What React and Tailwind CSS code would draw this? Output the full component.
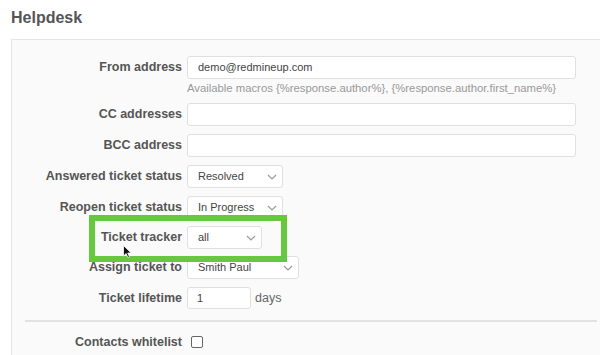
import React from 'react';

const font = { fontFamily: '"Liberation Sans", Arial, sans-serif' };

function Chevron() {
  return (
    <svg width="10" height="6" viewBox="0 0 10 6" className="shrink-0">
      <path d="M1 1l4 4 4-4" fill="none" stroke="#999" strokeWidth="1.2" />
    </svg>
  );
}

function Select({ value, width }) {
  return (
    <div className={`flex h-[23px] items-center justify-between whitespace-nowrap rounded-[3px] border border-[#e0e0e0] bg-white pl-[10px] pr-[5px] text-[11px] text-[#444] ${width}`}>
      <span>{value}</span>
      <Chevron />
    </div>
  );
}

function Row({ label, children, className = '' }) {
  return (
    <div className={`flex items-center ${className}`}>
      <label className="w-[170px] shrink-0 whitespace-nowrap text-right text-[12.5px] font-bold text-[#555]">{label}</label>
      <div className="ml-[5px] flex items-center">{children}</div>
    </div>
  );
}

export default function App() {
  return (
    <div className="relative h-[355px] w-[600px] overflow-hidden bg-white" style={font}>
      <h2 className="ml-[11px] pt-[7px] text-[16px] font-bold leading-[22px] text-[#555]">Helpdesk</h2>

      <div className="ml-[11px] mt-[10px] w-[620px] border border-[#e4e4e4] bg-[#fafafa] pt-[16px] pb-[20px]">
        <Row label="From address">
          <div className="flex h-[23px] w-[389px] items-center rounded-[3px] border border-[#e0e0e0] bg-white pl-[10px] text-[11px] text-[#444]">
            demo@redmineup.com
          </div>
        </Row>
        <div className="ml-[175px] mt-[1px] h-[17px] whitespace-nowrap text-[11.3px] leading-[17px] text-[#999]">
          Available macros {'{%response.author%}'}, {'{%response.author.first_name%}'}
        </div>

        <Row label="CC addresses" className="mt-[6px]">
          <div className="h-[23px] w-[389px] rounded-[3px] border border-[#e0e0e0] bg-white" />
        </Row>
        <Row label="BCC address" className="mt-[8px]">
          <div className="h-[23px] w-[389px] rounded-[3px] border border-[#e0e0e0] bg-white" />
        </Row>
        <Row label="Answered ticket status" className="mt-[8px]">
          <Select value="Resolved" width="w-[96px]" />
        </Row>
        <Row label="Reopen ticket status" className="mt-[8px]">
          <Select value="In Progress" width="w-[96px]" />
        </Row>
        <Row label="Ticket tracker" className="mt-[7px]">
          <Select value="all" width="w-[75px]" />
        </Row>
        <Row label="Assign ticket to" className="mt-[7px]">
          <Select value="Smith Paul" width="w-[112px]" />
        </Row>
        <Row label="Ticket lifetime" className="mt-[8px]">
          <div className="flex h-[22px] w-[64px] items-center rounded-[3px] border border-[#e0e0e0] bg-white pl-[9px] text-[11px] text-[#444]">
            1
          </div>
          <span className="ml-[4px] text-[12.5px] text-[#666]">days</span>
        </Row>

        <div className="ml-[13px] mt-[11px] h-[2px] w-[572px] bg-[#e2e2e2]" />

        <Row label="Contacts whitelist" className="mt-[10px] h-[20px]">
          <div className="ml-[4px] h-[12px] w-[12px] rounded-[2px] border border-[#666] bg-white" />
        </Row>
      </div>

      <div className="absolute left-[89px] top-[215px] h-[47px] w-[198px] border-[6px] border-[#66c83c]" />

      <svg className="absolute left-[123px] top-[245px]" width="9" height="13" viewBox="0 0 9 13">
        <path d="M0.5 0.5v10.5l2.6-2.4 1.8 3.9 1.6-0.7-1.8-3.8h3.5z" fill="#111" stroke="#fff" strokeWidth="0.8" />
      </svg>
    </div>
  );
}
